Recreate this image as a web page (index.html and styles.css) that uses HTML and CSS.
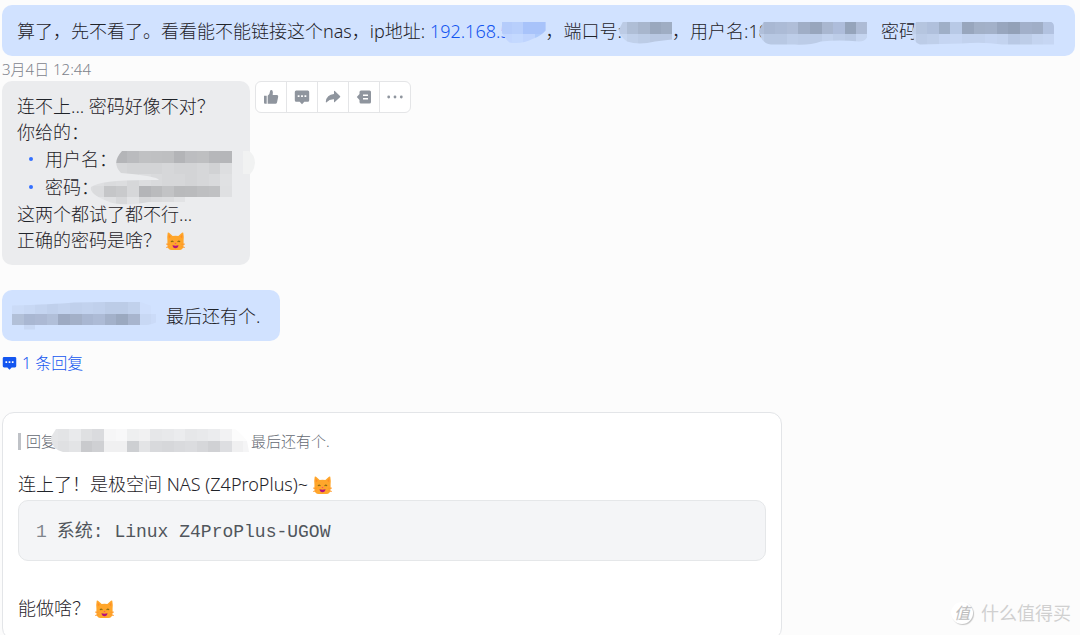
FILE: index.html
```html
<!DOCTYPE html>
<html lang="zh-CN">
<head>
  <meta charset="utf-8">
  <title>聊天</title>
  <link rel="stylesheet" href="styles.css">
</head>
<body>
  <!-- Shared icons -->
  <svg class="defs" aria-hidden="true">
    <symbol id="icon-cat" viewBox="0 0 20 20">
      <path fill="#ffa62b" d="M1.800 .8 Q2.800 .3 3.800 1.200 L7 4.200 Q10 3.800 13 4.200 L16.200 1.200 Q17.200 .3 18.200 .8 Q19 5 18.500 9 V14 Q18.300 19 14 19 H6 Q1.700 19 1.500 14 V9 Q1 5 1.800 .8Z"/>
      <path fill="#ff8c24" d="M2.800 2.600 L5 5 L3 6.500Z M17.200 2.600 L15 5 L17 6.500Z"/>
      <path stroke="#ff9a2a" stroke-width="1.200" d="M.3 12.800 L4 13 M.3 16.300 L4 15.300 M19.700 12.800 L16 13 M19.700 16.300 L16 15.300"/>
      <path fill="none" stroke="#8a6a12" stroke-width="1.100" stroke-linecap="round" d="M5.500 10.200 Q6.500 9 7.500 10.200 M12.500 10.200 Q13.500 9 14.500 10.200"/>
      <path fill="#f2407a" d="M9 11.500 H11 L10 12.800Z"/>
      <path fill="#b5127d" d="M6.800 14 Q10 14.800 13.200 14 Q12.700 17 10 17 Q7.300 17 6.800 14Z"/>
    </symbol>
    <symbol id="icon-comment" viewBox="0 0 16 16">
      <path fill="currentColor" d="M2.200 1.500 H13.800 Q15.200 1.500 15.200 3 V11.200 Q15.200 12.700 13.800 12.700 H10.300 L8 15.200 L5.700 12.700 H2.200 Q.8 12.700 .8 11.200 V3 Q.8 1.500 2.200 1.500Z"/>
      <path fill="#fff" d="M3.700 6.200h1.800v1.800H3.700Z M7.100 6.200h1.800v1.800H7.100Z M10.500 6.200h1.800v1.800h-1.800Z"/>
    </symbol>
  </svg>

  <main class="chat">
    <div class="bubble bubble-self">
      <span>算了，先不看了。看看能不能链接这个nas，ip地址:&nbsp;</span>
      <a href="#">192.168.5</a>
      <svg class="mosaic mosaic-ip" data-offset="-2" data-rows="b5ccfb b8cffc a8c3fa a8c3fa|c2d6ff c4d9ff bfd4fe aecafb"></svg>
      <span>，端口号:</span>
      <svg class="mosaic mosaic-port" data-offset="-4" data-rows="bccbe5 afbed6 a8b6cd 9aa8be 9fadc3|c6d6f0 c0d0ea bccce6 b9c8e2 b9c8e2"></svg>
      <span>，用户名:18</span>
      <svg class="mosaic mosaic-user" data-offset="-7" data-rows="b0bfda a9b8d3 acbbd6 b0bed8 a0aec6 98a6bd a9b7d0 aebddb 95a4bb adbbd5|bfcfea b8c8e3 b8c8e3 becee9 bccce7 bccce7 c2d2ed bdcde8 b9c9e4 c5d5f0"></svg>
      <span>密码</span>
      <svg class="mosaic mosaic-pass" data-offset="-8" data-rows="c0d0ea b5c5df b0c0dc 9fafc7 b8c9e6 98a6bd a2b0c7 a3b1c9 98a6be 93a1b8 a2b0ca a0aec7 b2c2e0|c8d8f4 bccce7 bfcfea c5d5f2 c6d6f3 c2d2ee c2d2ee c5d5f2 c3d3ef b9c9e5 bdcde8 c4d4f0 c6d6f3"></svg>
    </div>

    <time class="time">3月4日 12:44</time>

    <div class="message-row">
      <div class="bubble bubble-other">
        <p>连不上... 密码好像不对？</p>
        <p>你给的：</p>
        <ul class="list">
          <li>用户名：</li>
          <li>密码：</li>
        </ul>
        <p>这两个都试了都不行...</p>
        <p>正确的密码是啥？ <svg class="emoji"><use href="#icon-cat"/></svg></p>
        <svg class="mosaic mosaic-login" data-offset="-8" data-rows="- - cfd0d2 b4b5b8 babbbe c0c1c3 bfc0c2 bebfc1 b3b4b7 bcbdc0 bebfc1 b6b7ba b5b6b9 ebecee f1f2f2|- - dcdddf d6d7d9 d3d4d6 d3d4d6 d3d4d6 d6d7d9 d3d4d6 d3d4d6 d6d7d9 d1d2d4 dddee0 ebecee f1f2f2|e2e3e5 dedfe1 dadbdd dcdddf d6d7d9 dcdddf d9dadc d6d7d9 d6d7d9 d3d4d6 d6d7d9 d9dadc e0e1e3 ebecee|dcdddf dadbdd c5c6c8 c9cacc d6d7d9 b4b5b8 babbbd c2c3c5 b9babc babbbd bebfc1 c0c1c3 dfe0e2 ebecee|e5e6e8 e2e3e5 dfe0e2 d7d8da e2e3e5 d7d8da dadbdd dcdddf e2e3e5"></svg>
      </div>

      <div class="actions">
        <button type="button" aria-label="赞">
          <svg viewBox="0 0 16 16"><path fill="currentColor" d="M1 6.800h2.700v8H2Q1 14.800 1 13.800Z M4.700 6.800 Q7 5 7.200 1.600 Q8 .4 9.200 1.300 Q10.300 2.500 9.700 6 H13.900 Q15.500 6.200 15.200 7.800 L14 13.500 Q13.600 14.800 12.500 14.800 H4.700Z"/></svg>
        </button>
        <button type="button" aria-label="回复">
          <svg><use href="#icon-comment"/></svg>
        </button>
        <button type="button" aria-label="转发">
          <svg viewBox="0 0 16 16"><path fill="currentColor" d="M9 2.300 Q9 1.300 9.800 2 L15 7 Q15.600 7.600 15 8.200 L9.800 13 Q9 13.600 9 12.700 V10.300 Q4.500 10 1.600 13.300 Q.8 13.800 .8 12.800 Q1.600 5.600 9 5.100Z"/></svg>
        </button>
        <button type="button" aria-label="话题">
          <svg viewBox="0 0 16 16"><path fill="currentColor" d="M5 1.500 H13.500 Q15 1.500 15 3 V13 Q15 14.500 13.500 14.500 H5 Q3.500 14.500 3.500 13 V11 L.8 8 L3.500 5 V3 Q3.500 1.500 5 1.500Z"/><path stroke="#fff" stroke-width="1.500" d="M7 6.200 H12 M7 9.800 H12"/></svg>
        </button>
        <button type="button" aria-label="更多">
          <svg viewBox="0 0 16 16"><g fill="currentColor"><circle cx="1.700" cy="8" r="1.400"/><circle cx="8" cy="8" r="1.400"/><circle cx="14.300" cy="8" r="1.400"/></g></svg>
        </button>
      </div>
    </div>

    <div class="bubble bubble-self bubble-short">
      <svg class="mosaic mosaic-short" data-offset="0" data-rows="cbdbf7 c8d8f4 c4d4f0 c0d0ec c3d3ef c0d0ec c2d2ee c0d0ec bccce7 bccce7 c1d1ec cfdffc|b2c0d8 a9b7d2 acb9d4 b1bfd9 9daac3 a3b0c8 a9b7d2 adbbd6 a3b1ca 9ba9c0 a8b5ce c8d8f4 cbdbf8|d1e2ff c8d8f4"></svg>
      <span>最后还有个.</span>
    </div>
    <a class="replies" href="#"><svg><use href="#icon-comment"/></svg>1 条回复</a>

    <article class="card">
      <div class="quote">
        <span>回复</span>
        <svg class="mosaic mosaic-quote" data-offset="-5" data-rows="e5e6e8 e3e4e6 e9eaec dfe0e2 dadbde f6f6f7 f8f8f9 eeeff0 f1f1f2 e6e7e9 e8e9eb ebecee e6e7e9 e8e9eb ebecee f2f2f3 fcfcfc fcfcfc|e3e4e6 dfe0e2 e3e4e6 c9cacd cfd0d3 f0f0f1 f0f0f1 cdcfd2 e3e4e6 d8d9dc d6d7da d9dadd dbdcdf d6d7da d0d1d4 dddee1 f0f0f1 f5f5f6"></svg>
        <span>最后还有个.</span>
      </div>
      <p>连上了！是极空间 NAS (Z4ProPlus)~ <svg class="emoji"><use href="#icon-cat"/></svg></p>
      <pre class="code"><span class="line-number">1</span><code>系统: Linux Z4ProPlus-UGOW</code></pre>
      <p>能做啥？ <svg class="emoji"><use href="#icon-cat"/></svg></p>
    </article>

    <div class="watermark"><span class="watermark-logo">值</span>什么值得买</div>
  </main>
  <script src="mosaic.js"></script>
</body>
</html>
```

FILE: styles.css
```css
/* Main Element Styles */
* {
  box-sizing: border-box;
}
body {
  margin: 0;
  background: #fcfcfc;
  color: #1f2329;
  font-family: "Noto Sans", "Noto Sans CJK SC", sans-serif;
  font-size: 18px;
  font-weight: 300;
  line-height: 26px;
}
p {
  margin: 0;
}
a {
  color: #1456f0;
  text-decoration: none;
}
.defs {
  display: none;
}
.chat {
  position: relative;
  height: 100vh;
  padding: 5px 5px 0 2px;
  overflow: hidden;
}

/* Bubble Styles */
.bubble {
  position: relative;
  border-radius: 10px;
  padding: 12px 15px;
}
.bubble-self {
  display: flex;
  align-items: center;
  height: 51px;
  background: #d1e2ff;
  white-space: nowrap;
}
.bubble-other {
  width: 248px;
  background: #ebecee;
}
.bubble-short {
  width: fit-content;
  margin-top: 25px;
  padding: 12px 20px 12px 10px;
}
.time {
  display: block;
  height: 25px;
  color: #7d838c;
  font-size: 15px;
}
.message-row {
  display: flex;
  align-items: flex-start;
  gap: 5px;
}
.list {
  margin: 0;
  padding: 0;
  list-style: none;
}
.list li {
  display: flex;
  align-items: center;
  height: 28px;
}
.list li::before {
  content: "";
  width: 4px;
  height: 4px;
  margin: 0 12px;
  border-radius: 50%;
  background: #3370ff;
}
.emoji {
  width: 19px;
  height: 19px;
  vertical-align: -4px;
}

/* Action Bar Styles */
.actions {
  display: flex;
  height: 32px;
  border: 1px solid #e4e5e7;
  border-radius: 6px;
  background: #fff;
}
.actions button {
  display: flex;
  align-items: center;
  justify-content: center;
  width: 31px;
  padding: 0;
  border: 0;
  border-left: 1px solid #e4e5e7;
  background: none;
  color: #8f959e;
}
.actions button:first-child {
  width: 30px;
  border-left: 0;
}
.actions svg {
  width: 16px;
  height: 16px;
}

/* Mosaic Styles */
.mosaic {
  position: relative;
  flex: none;
  height: 24px;
  margin-top: 6px;
}
.mosaic-ip {
  width: 44px;
  margin-left: -9px;
  clip-path: path("M0 0 H44 V9 Q40 14 32 17 Q20 23 8 21 Q4 18 0 11 Z");
}
.mosaic-port {
  width: 53px;
  margin-left: -3px;
  clip-path: path("M4 0 H53 V18 Q44 19 36 20 Q20 24 8 20 Q0 14 0 8 Z");
}
.mosaic-user {
  width: 108px;
  margin: 6px 14px 0 -10px;
  clip-path: path("M5 0 H108 V16 Q106 20 100 20 Q80 18 62 20 Q50 24 36 23 H12 Q2 22 0 9 Z");
}
.mosaic-pass {
  width: 142px;
  margin-left: -5px;
  clip-path: path("M4 0 H138 Q142 1 142 5 V23 H90 Q70 20 50 22 L8 23 Q0 20 0 10 Z");
}
.mosaic-login {
  position: absolute;
  top: 70px;
  left: 87px;
  width: 166px;
  height: 54px;
  margin: 0;
  clip-path: path("M33 0 H160 Q166 4 166 12 Q165 22 158 25 L157 46 H97 V51 H60 Q30 56 18 50 Q0 43 2 36 Q12 28 70 29 Q68 25 32 22 Q22 12 33 0 Z");
}
.mosaic-short {
  width: 144px;
  height: 28px;
  margin: 0 10px 0 0;
  clip-path: path("M0 4 Q40 3 62 1 L127 0 L144 6 V21 Q138 24 127 24 H32 V28 H10 V24 H0 Z");
}
.mosaic-quote {
  width: 198px;
  margin: 0 2px 0 -5px;
  clip-path: path("M5 0 H184 Q190 4 196 12 L198 23 H12 Q0 20 0 8 Z");
}

/* Reply Styles */
.replies {
  display: flex;
  align-items: center;
  gap: 5px;
  width: fit-content;
  margin-top: 9px;
  font-size: 16px;
}
.replies svg {
  width: 15px;
  height: 16px;
}
.card {
  max-width: 780px;
  height: 228px;
  margin-top: 36px;
  padding: 16px 15px;
  border: 1px solid #e3e5e8;
  border-radius: 12px;
  background: #fff;
}
.quote {
  display: flex;
  align-items: center;
  height: 24px;
  margin-bottom: 18px;
  color: #646a73;
  font-size: 15px;
}
.quote::before {
  content: "";
  width: 3px;
  height: 17px;
  margin-right: 5px;
  background: #bfc2c7;
}
.code {
  display: flex;
  align-items: center;
  gap: 10px;
  height: 61px;
  margin: 3px 0 34px;
  padding: 2px 17px 0;
  border: 1px solid #e5e7e9;
  border-radius: 10px;
  background: #f4f5f7;
  color: #50555c;
  font-family: "Liberation Mono", "Noto Sans CJK SC", monospace;
  font-size: 18px;
  font-weight: 400;
}
.code code {
  font-family: inherit;
}
.line-number {
  color: #80858d;
}

/* Watermark Styles */
.watermark {
  position: absolute;
  right: 9px;
  bottom: 9px;
  display: flex;
  align-items: center;
  gap: 8px;
  color: #d0d0d0;
  font-weight: 400;
}
.watermark-logo {
  width: 22px;
  height: 22px;
  border-radius: 50%;
  background: #fff;
  box-shadow: 1px 1px 1px #c4c4c4;
  color: #bdbdbd;
  font-size: 16px;
  line-height: 22px;
  text-align: center;
  font-style: italic;
}
```

FILE: mosaic.js
```js
// Fill every mosaic with its rows of coloured cells
var CELL = 11.6;

document.querySelectorAll('.mosaic').forEach(function(svg) {
  var offset = parseFloat(svg.dataset.offset);

  svg.dataset.rows.split('|').forEach(function(row, y) {
    row.split(' ').forEach(function(color, x) {
      if (color === '-') return;

      var rect = document.createElementNS('http://www.w3.org/2000/svg', 'rect');
      rect.setAttribute('x', offset + x * CELL);
      rect.setAttribute('y', y * CELL);
      rect.setAttribute('width', CELL);
      rect.setAttribute('height', CELL);
      rect.setAttribute('fill', '#' + color);
      rect.setAttribute('shape-rendering', 'crispEdges');
      svg.appendChild(rect);
    });
  });
});
```
